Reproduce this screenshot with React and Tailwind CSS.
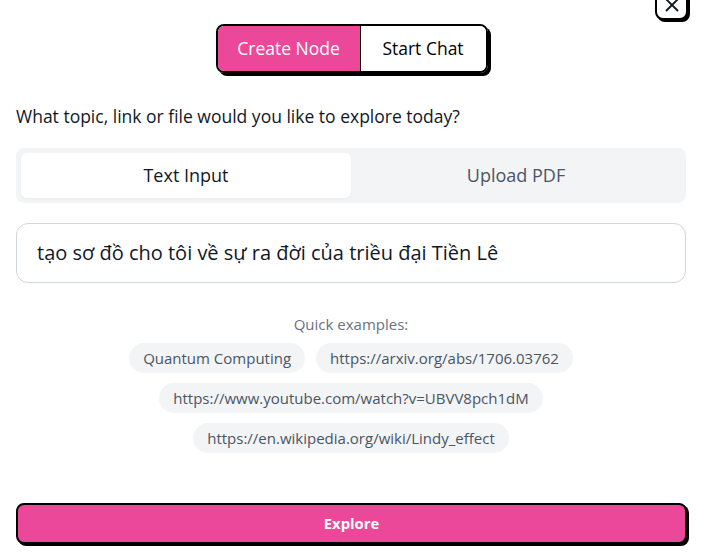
import { X } from 'lucide-react';

const examples = [
  ['Quantum Computing', 'https://arxiv.org/abs/1706.03762'],
  ['https://www.youtube.com/watch?v=UBVV8pch1dM'],
  ['https://en.wikipedia.org/wiki/Lindy_effect'],
];

export default function App() {
  return (
    <div className="relative w-[715px] h-[553px] overflow-hidden bg-white font-['Open_Sans',sans-serif] text-gray-900">
      <button className="absolute right-[27px] top-[-14px] w-[33px] h-[34px] flex items-end justify-center pb-[2px] rounded-lg border-2 border-black bg-white shadow-[2px_2px_0_#000]">
        <X size={22} strokeWidth={2} />
      </button>

      <div className="w-[670px] ml-4 pt-6 flex flex-col">
        <div className="flex justify-center">
          <div className="flex ml-[1px] rounded-lg border-2 border-black shadow-[3px_3px_0_#000] overflow-hidden">
            <button className="w-[143px] h-[45px] bg-[#ec4899] text-white text-[17.5px] border-r border-black">Create Node</button>
            <button className="w-[125px] h-[45px] bg-white text-black text-[17.5px]">Start Chat</button>
          </div>
        </div>

        <p className="mt-[31px] text-[17.5px] leading-6">What topic, link or file would you like to explore today?</p>

        <div className="mt-5 h-[55px] rounded-lg bg-gray-100 p-[5px] grid grid-cols-2">
          <div className="rounded-md bg-white flex items-center justify-center text-[18px] text-gray-900 shadow-[0_1px_2px_rgba(0,0,0,0.04)]">Text Input</div>
          <div className="flex items-center justify-center text-[18px] text-gray-600">Upload PDF</div>
        </div>

        <div className="mt-5 h-[60px] rounded-xl border border-gray-300 flex items-center px-5 text-[20px] text-gray-900">
          tạo sơ đồ cho tôi về sự ra đời của triều đại Tiền Lê
        </div>

        <p className="mt-[31px] text-center text-[15px] leading-5 text-gray-500">Quick examples:</p>

        <div className="mt-[9px] flex flex-col items-center gap-[10px]">
          {examples.map((row, i) => (
            <div key={i} className="flex gap-[11px]">
              {row.map((ex) => (
                <span key={ex} className="h-[30px] px-[14px] rounded-full bg-gray-100 text-gray-600 text-[15px] flex items-center">{ex}</span>
              ))}
            </div>
          ))}
        </div>

        <button className="mt-[50px] h-[41px] w-[671px] rounded-lg border-2 border-black bg-[#ec4899] text-white text-[14.8px] font-bold shadow-[2px_2px_0_#000]">Explore</button>
      </div>
    </div>
  );
}
